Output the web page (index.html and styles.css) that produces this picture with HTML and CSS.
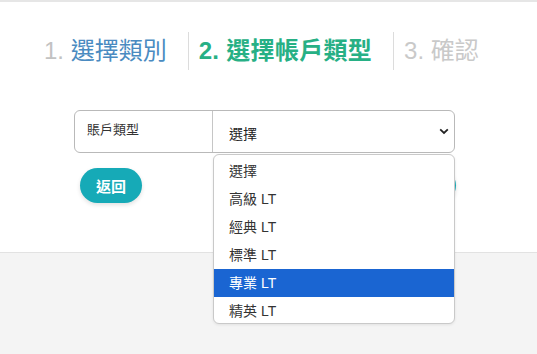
FILE: index.html
```html
<!DOCTYPE html>
<html lang="zh-Hant">
<head>
<meta charset="utf-8">
<link rel="stylesheet" href="styles.css">
</head>
<body>
<div class="page">
  <div class="steps">
    <div class="step done"><span class="num">1.</span> 選擇類別</div>
    <div class="step active"><span class="num">2.</span> 選擇帳戶類型</div>
    <div class="step todo"><span class="num">3.</span> 確認</div>
  </div>
  <div class="form">
    <div class="group">
      <div class="label">賬戶類型</div>
      <div class="select">
        <span>選擇</span>
        <svg class="chev" width="10" height="7" viewBox="0 0 10 7"><path d="M1.2 1.4 L5 5 L8.8 1.4" fill="none" stroke="#222" stroke-width="1.8"/></svg>
      </div>
      <ul class="menu">
        <li>選擇</li>
        <li>高級 LT</li>
        <li>經典 LT</li>
        <li>標準 LT</li>
        <li class="hl">專業 LT</li>
        <li>精英 LT</li>
      </ul>
    </div>
    <div class="buttons">
      <button class="btn">返回</button>
      <button class="btn">下一步</button>
    </div>
  </div>
</div>
<div class="footer"></div>
</body>
</html>
```
FILE: styles.css
```css
html, body {
  margin: 0;
  padding: 0;
  background: #f4f4f4;
  font-family: "Liberation Sans", "Noto Sans CJK TC", sans-serif;
}
body {
  min-height: 100vh;
  display: flex;
  flex-direction: column;
}
.page {
  background: #fff;
  border-top: 2px solid #e6e6e6;
  border-bottom: 1px solid #e2e2e2;
  height: 250px;
  flex: none;
  position: relative;
  z-index: 1;
}
.footer {
  flex: 1;
  background: #f4f4f4;
}
.steps {
  display: flex;
  padding: 30px 0 0 44px;
}
.step {
  font-size: 24px;
  line-height: 38px;
  height: 38px;
  padding: 0 21px 0 10px;
  border-left: 1px solid #dcdcdc;
  white-space: nowrap;
}
.step.done {
  border-left: none;
  padding-left: 0;
  color: #4a8bc1;
}
.step.done .num { color: #c2c2c2; }
.step.active { color: #27b085; font-weight: bold; letter-spacing: 0.3px; }
.step.todo { color: #c9c9c9; }
.form {
  margin: 40px 0 0 74px;
  width: 381px;
}
.group {
  position: relative;
  z-index: 5;
  display: flex;
  height: 43px;
  border: 1px solid #b9b9b9;
  border-radius: 6px;
  box-sizing: border-box;
}
.label {
  width: 138px;
  box-sizing: border-box;
  border-right: 1px solid #c6c6c6;
  padding: 10px 0 0 12px;
  font-size: 13px;
  line-height: 18px;
  color: #333;
}
.select {
  flex: 1;
  display: flex;
  align-items: center;
  justify-content: space-between;
  padding: 2px 5px 0 16px;
  font-size: 14px;
  color: #222;
}
.chev { margin-top: -2px; }
.menu {
  position: absolute;
  left: 138px;
  top: 43px;
  width: 242px;
  height: 170px;
  box-sizing: border-box;
  margin: 0;
  padding: 2px 0 0;
  list-style: none;
  background: #fff;
  border: 1px solid #c9c9c9;
  border-radius: 6px;
  box-shadow: 0 1px 3px rgba(0,0,0,0.08);
  overflow: hidden;
}
.menu li {
  height: 28px;
  line-height: 28px;
  padding-left: 15px;
  font-size: 14px;
  color: #333;
}
.menu li.hl {
  background: #1a65d2;
  color: #fff;
}
.buttons {
  display: flex;
  justify-content: space-between;
  margin: 15px -1px 0 6px;
}
.btn {
  height: 35px;
  padding: 0 16px;
  border: none;
  border-radius: 18px;
  background: #16aab7;
  color: #fff;
  font-family: "Liberation Sans", "Noto Sans CJK TC", sans-serif;
  font-size: 15px;
  font-weight: bold;
  box-shadow: 0 2px 4px rgba(0,0,0,0.12);
}
```
